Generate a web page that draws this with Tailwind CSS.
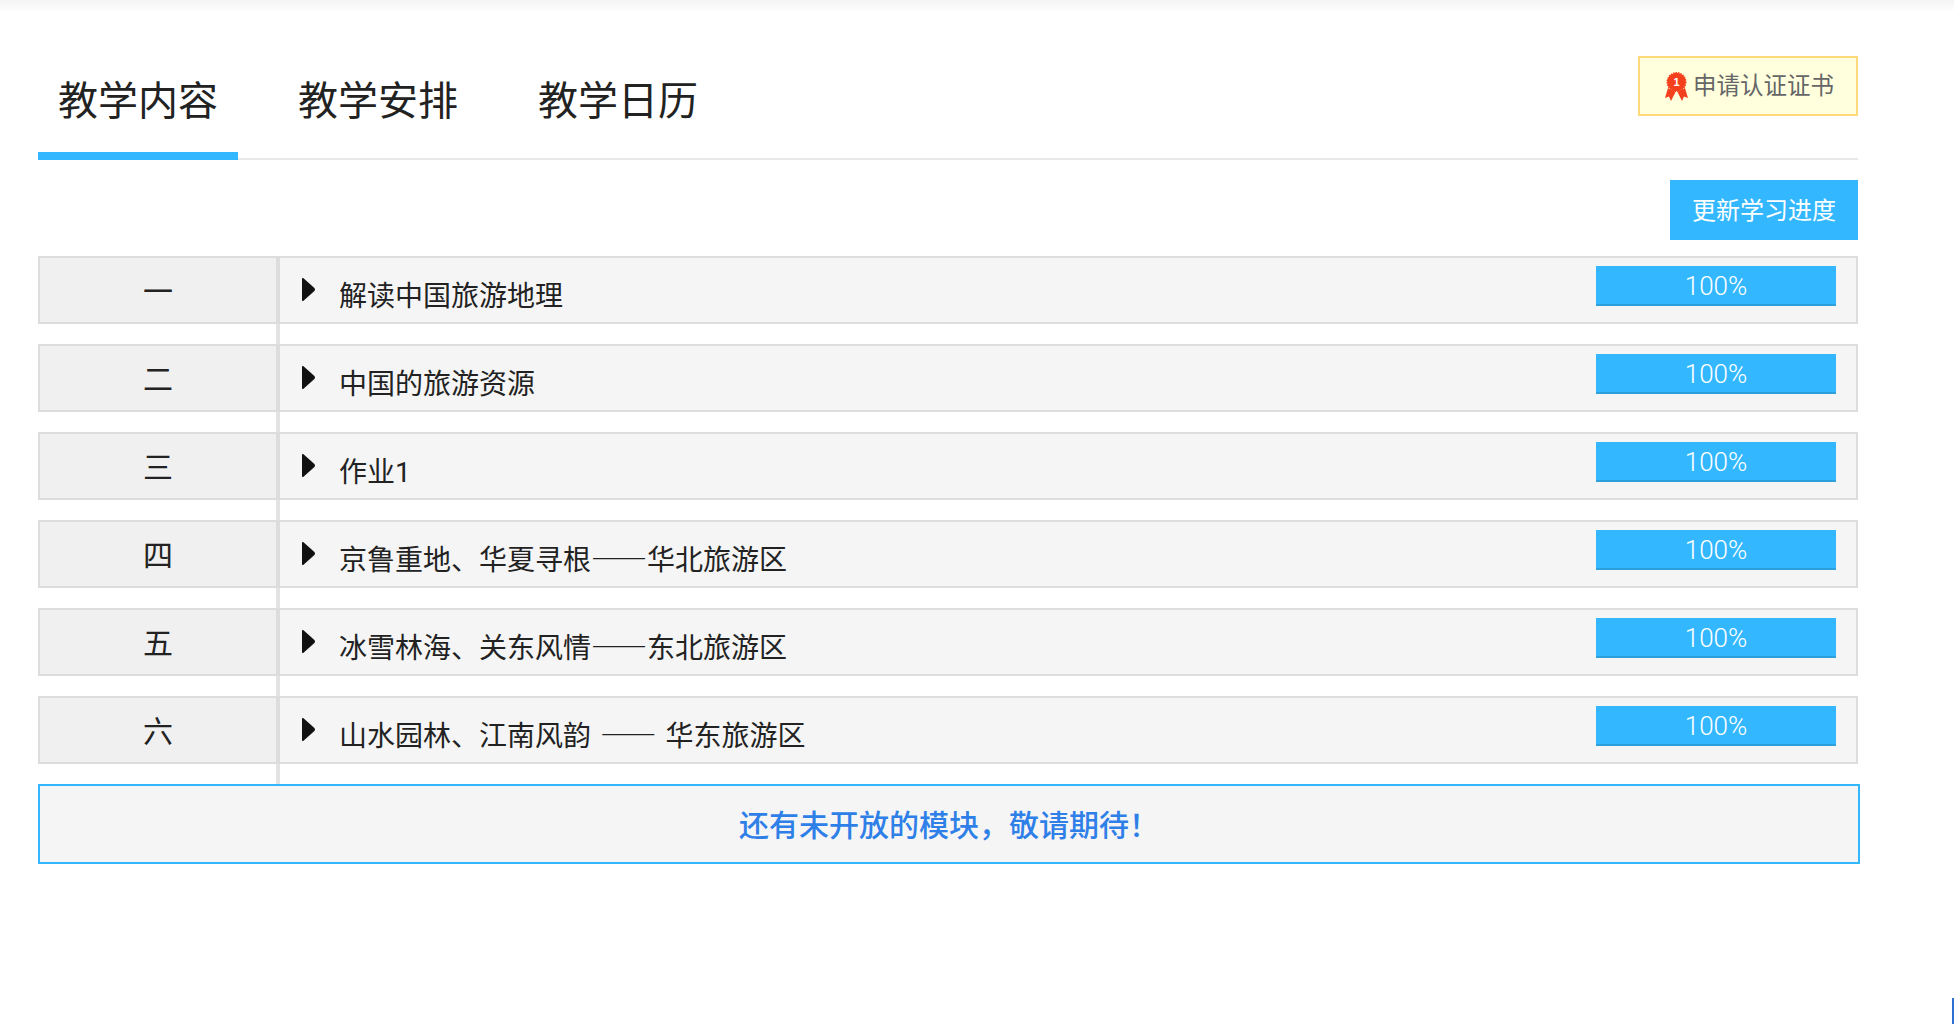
<!DOCTYPE html>
<html lang="zh-CN">
  <head>
    <meta charset="UTF-8" />
    <title>教学内容</title>
    <script src="https://cdn.jsdelivr.net/npm/@tailwindcss/browser@4"></script>
  </head>
  <body class="relative h-[1024px] overflow-hidden bg-white font-['Noto_Sans_CJK_SC','Noto_Sans',sans-serif] text-[#222]">
    <div class="h-3 bg-gradient-to-b from-[#f4f4f4] to-white"></div>

    <main class="ml-[38px] w-[1820px]">
      <!-- tabs -->
      <header class="flex h-[148px] items-start justify-between border-b-2 border-[#e8e8e8]">
        <nav class="-mb-[2px] flex h-[148px] gap-10 text-[40px]">
          <a class="flex w-[200px] items-center justify-center border-b-8 border-[#33b8ff] pt-8">教学内容</a>
          <a class="flex w-[200px] items-center justify-center pt-6">教学安排</a>
          <a class="flex w-[200px] items-center justify-center pt-6">教学日历</a>
        </nav>
        <button class="mt-11 flex h-[60px] w-[220px] items-center border-2 border-[#ffd97a] bg-[#ffffdd] pl-[25px] text-[23.5px] text-[#666]">
          <svg class="mt-[2px] mr-[5px] h-[30px] w-[23px] shrink-0" viewBox="0 0 23 30">
            <path d="M3 16 0 26l4-1.500 2 4.500 4.500-9zM20 16l3 10-4-1.500-2 4.500-4.500-9z" fill="#f4401c" />
            <circle cx="11.500" cy="10" r="9.300" fill="#f4401c" stroke="#f4401c" stroke-width="1.400" stroke-dasharray="1.500 1" />
            <text x="11.500" y="14" text-anchor="middle" fill="#fff" font-size="11" font-weight="700" font-family="Liberation Sans">1</text>
          </svg>
          <span class="pb-[2px]">申请认证证书</span>
        </button>
      </header>

      <div class="mt-5 mb-4 flex justify-end">
        <button class="h-[60px] w-[188px] bg-[#33b8ff] pb-[2px] text-2xl text-white">更新学习进度</button>
      </div>

      <!-- rows -->
      <section>
        <div class="flex h-[68px] border-2 border-[#ddd] bg-[#f5f5f5]">
          <div class="flex w-[240px] items-center justify-center border-r-4 border-[#ddd] bg-[#f0f0f0] pb-[2px] text-[30px]">一</div>
          <svg class="mt-5 ml-[22px] h-[23px] w-[13px]" viewBox="0 0 13 23"><path d="M1.500.2 12.400 10q1.200 1.500 0 3L1.500 22.800Q0 23.500 0 22V1Q0-.5 1.500.2z" fill="#111" /></svg>
          <span class="ml-6 pt-2 text-[28px] leading-[56px]">解读中国旅游地理</span>
          <div class="mt-2 mr-5 ml-auto h-10 w-[240px] border-b-2 border-[#2c9fdc] bg-[#33b8ff] text-center font-['Roboto'] text-[26px] leading-[40px] font-light text-white">100%</div>
        </div>
        <div class="ml-[238px] h-5 border-l-4 border-[#e3e3e3]"></div>

        <div class="flex h-[68px] border-2 border-[#ddd] bg-[#f5f5f5]">
          <div class="flex w-[240px] items-center justify-center border-r-4 border-[#ddd] bg-[#f0f0f0] pb-[2px] text-[30px]">二</div>
          <svg class="mt-5 ml-[22px] h-[23px] w-[13px]" viewBox="0 0 13 23"><path d="M1.500.2 12.400 10q1.200 1.500 0 3L1.500 22.800Q0 23.500 0 22V1Q0-.5 1.500.2z" fill="#111" /></svg>
          <span class="ml-6 pt-2 text-[28px] leading-[56px]">中国的旅游资源</span>
          <div class="mt-2 mr-5 ml-auto h-10 w-[240px] border-b-2 border-[#2c9fdc] bg-[#33b8ff] text-center font-['Roboto'] text-[26px] leading-[40px] font-light text-white">100%</div>
        </div>
        <div class="ml-[238px] h-5 border-l-4 border-[#e3e3e3]"></div>

        <div class="flex h-[68px] border-2 border-[#ddd] bg-[#f5f5f5]">
          <div class="flex w-[240px] items-center justify-center border-r-4 border-[#ddd] bg-[#f0f0f0] pb-[2px] text-[30px]">三</div>
          <svg class="mt-5 ml-[22px] h-[23px] w-[13px]" viewBox="0 0 13 23"><path d="M1.500.2 12.400 10q1.200 1.500 0 3L1.500 22.800Q0 23.500 0 22V1Q0-.5 1.500.2z" fill="#111" /></svg>
          <span class="ml-6 pt-2 text-[28px] leading-[56px]">作业<span class="font-['Roboto']">1</span></span>
          <div class="mt-2 mr-5 ml-auto h-10 w-[240px] border-b-2 border-[#2c9fdc] bg-[#33b8ff] text-center font-['Roboto'] text-[26px] leading-[40px] font-light text-white">100%</div>
        </div>
        <div class="ml-[238px] h-5 border-l-4 border-[#e3e3e3]"></div>

        <div class="flex h-[68px] border-2 border-[#ddd] bg-[#f5f5f5]">
          <div class="flex w-[240px] items-center justify-center border-r-4 border-[#ddd] bg-[#f0f0f0] pb-[2px] text-[30px]">四</div>
          <svg class="mt-5 ml-[22px] h-[23px] w-[13px]" viewBox="0 0 13 23"><path d="M1.500.2 12.400 10q1.200 1.500 0 3L1.500 22.800Q0 23.500 0 22V1Q0-.5 1.500.2z" fill="#111" /></svg>
          <span class="ml-6 pt-2 text-[28px] leading-[56px]">京鲁重地、华夏寻根——华北旅游区</span>
          <div class="mt-2 mr-5 ml-auto h-10 w-[240px] border-b-2 border-[#2c9fdc] bg-[#33b8ff] text-center font-['Roboto'] text-[26px] leading-[40px] font-light text-white">100%</div>
        </div>
        <div class="ml-[238px] h-5 border-l-4 border-[#e3e3e3]"></div>

        <div class="flex h-[68px] border-2 border-[#ddd] bg-[#f5f5f5]">
          <div class="flex w-[240px] items-center justify-center border-r-4 border-[#ddd] bg-[#f0f0f0] pb-[2px] text-[30px]">五</div>
          <svg class="mt-5 ml-[22px] h-[23px] w-[13px]" viewBox="0 0 13 23"><path d="M1.500.2 12.400 10q1.200 1.500 0 3L1.500 22.800Q0 23.500 0 22V1Q0-.5 1.500.2z" fill="#111" /></svg>
          <span class="ml-6 pt-2 text-[28px] leading-[56px]">冰雪林海、关东风情——东北旅游区</span>
          <div class="mt-2 mr-5 ml-auto h-10 w-[240px] border-b-2 border-[#2c9fdc] bg-[#33b8ff] text-center font-['Roboto'] text-[26px] leading-[40px] font-light text-white">100%</div>
        </div>
        <div class="ml-[238px] h-5 border-l-4 border-[#e3e3e3]"></div>

        <div class="flex h-[68px] border-2 border-[#ddd] bg-[#f5f5f5]">
          <div class="flex w-[240px] items-center justify-center border-r-4 border-[#ddd] bg-[#f0f0f0] pb-[2px] text-[30px]">六</div>
          <svg class="mt-5 ml-[22px] h-[23px] w-[13px]" viewBox="0 0 13 23"><path d="M1.500.2 12.400 10q1.200 1.500 0 3L1.500 22.800Q0 23.500 0 22V1Q0-.5 1.500.2z" fill="#111" /></svg>
          <span class="ml-6 pt-2 text-[28px] leading-[56px] [word-spacing:3px]">山水园林、江南风韵 —— 华东旅游区</span>
          <div class="mt-2 mr-5 ml-auto h-10 w-[240px] border-b-2 border-[#2c9fdc] bg-[#33b8ff] text-center font-['Roboto'] text-[26px] leading-[40px] font-light text-white">100%</div>
        </div>
        <div class="ml-[238px] h-5 border-l-4 border-[#e3e3e3]"></div>
      </section>

      <div class="flex h-20 w-[1822px] items-center justify-center border-2 border-[#33b8ff] bg-[#f5f5f5] pb-[2px] text-[30px] font-medium text-[#2f7fe8]">还有未开放的模块，敬请期待！</div>
    </main>

    <div class="absolute right-0 bottom-0 h-[26px] w-[2px] bg-[#2f6fd0]"></div>
  </body>
</html>
